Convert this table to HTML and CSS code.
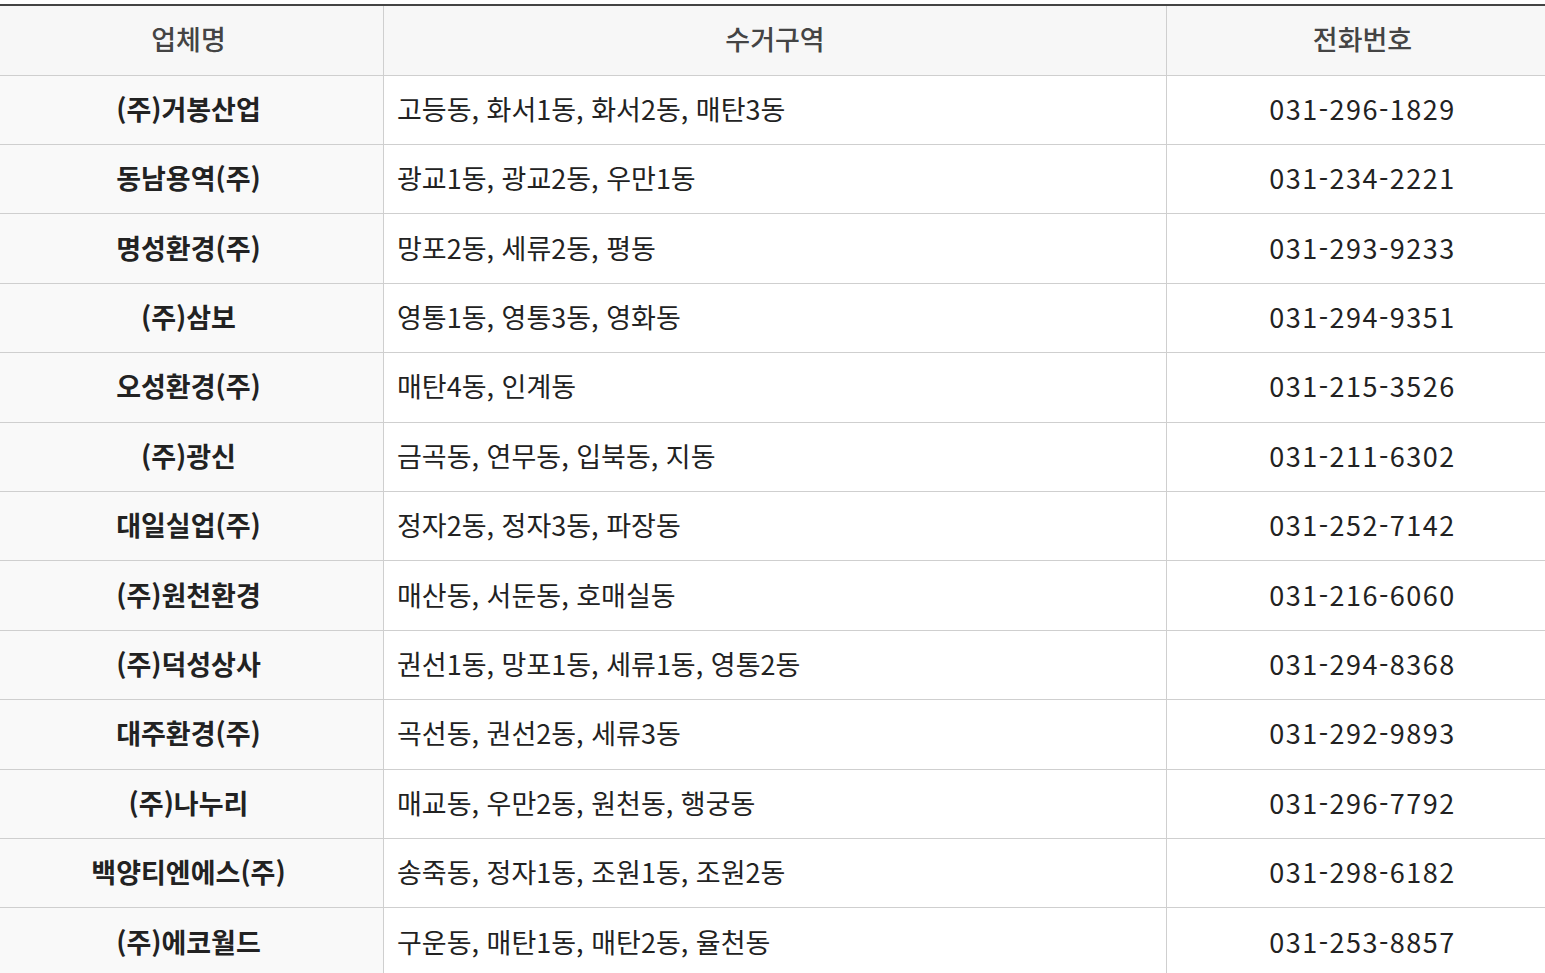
FILE: index.html
```html
<!DOCTYPE html>
<html lang="ko">
<head>
<meta charset="utf-8">
<title>수거업체</title>
<link rel="stylesheet" href="styles.css">
</head>
<body>
<table class="list">
  <colgroup>
    <col class="c-name">
    <col class="c-area">
    <col class="c-tel">
  </colgroup>
  <thead>
    <tr><th>업체명</th><th>수거구역</th><th>전화번호</th></tr>
  </thead>
  <tbody>
    <tr><th>(주)거봉산업</th><td class="area">고등동, 화서1동, 화서2동, 매탄3동</td><td class="tel">031-296-1829</td></tr>
    <tr><th>동남용역(주)</th><td class="area">광교1동, 광교2동, 우만1동</td><td class="tel">031-234-2221</td></tr>
    <tr><th>명성환경(주)</th><td class="area">망포2동, 세류2동, 평동</td><td class="tel">031-293-9233</td></tr>
    <tr><th>(주)삼보</th><td class="area">영통1동, 영통3동, 영화동</td><td class="tel">031-294-9351</td></tr>
    <tr><th>오성환경(주)</th><td class="area">매탄4동, 인계동</td><td class="tel">031-215-3526</td></tr>
    <tr><th>(주)광신</th><td class="area">금곡동, 연무동, 입북동, 지동</td><td class="tel">031-211-6302</td></tr>
    <tr><th>대일실업(주)</th><td class="area">정자2동, 정자3동, 파장동</td><td class="tel">031-252-7142</td></tr>
    <tr><th>(주)원천환경</th><td class="area">매산동, 서둔동, 호매실동</td><td class="tel">031-216-6060</td></tr>
    <tr><th>(주)덕성상사</th><td class="area">권선1동, 망포1동, 세류1동, 영통2동</td><td class="tel">031-294-8368</td></tr>
    <tr><th>대주환경(주)</th><td class="area">곡선동, 권선2동, 세류3동</td><td class="tel">031-292-9893</td></tr>
    <tr><th>(주)나누리</th><td class="area">매교동, 우만2동, 원천동, 행궁동</td><td class="tel">031-296-7792</td></tr>
    <tr><th>백양티엔에스(주)</th><td class="area">송죽동, 정자1동, 조원1동, 조원2동</td><td class="tel">031-298-6182</td></tr>
    <tr><th>(주)에코월드</th><td class="area">구운동, 매탄1동, 매탄2동, 율천동</td><td class="tel">031-253-8857</td></tr>
  </tbody>
</table>
</body>
</html>
```
FILE: styles.css
```css
html, body {
  margin: 0;
  padding: 0;
  background: #fff;
  overflow: hidden;
}
body {
  font-family: "Noto Sans CJK KR", "Noto Sans", sans-serif;
  color: #222;
}
.list {
  border-collapse: collapse;
  table-layout: fixed;
  width: 1565px;
  margin: 4px 0 0 -7px;
  border-top: 2px solid #444;
}
.c-name { width: 390px; }
.c-area { width: 783px; }
.c-tel { width: 392px; }
.list th,
.list td {
  height: 69.42px;
  padding: 0 13px 2px;
  border: 1px solid #cfcfcf;
  font-size: 27px;
  line-height: 36px;
  vertical-align: middle;
  box-sizing: border-box;
}
.list thead th {
  height: 70px;
  border-top: none;
  background: #f7f7f7;
  font-weight: 500;
  color: #444;
  text-align: center;
}
.list tbody th {
  background: #f9f9f9;
  font-weight: 700;
  color: #222;
  text-align: center;
}
.list td.area {
  text-align: left;
  font-weight: 400;
}
.list td.tel {
  text-align: center;
  font-weight: 400;
  letter-spacing: 1.5px;
}
```
